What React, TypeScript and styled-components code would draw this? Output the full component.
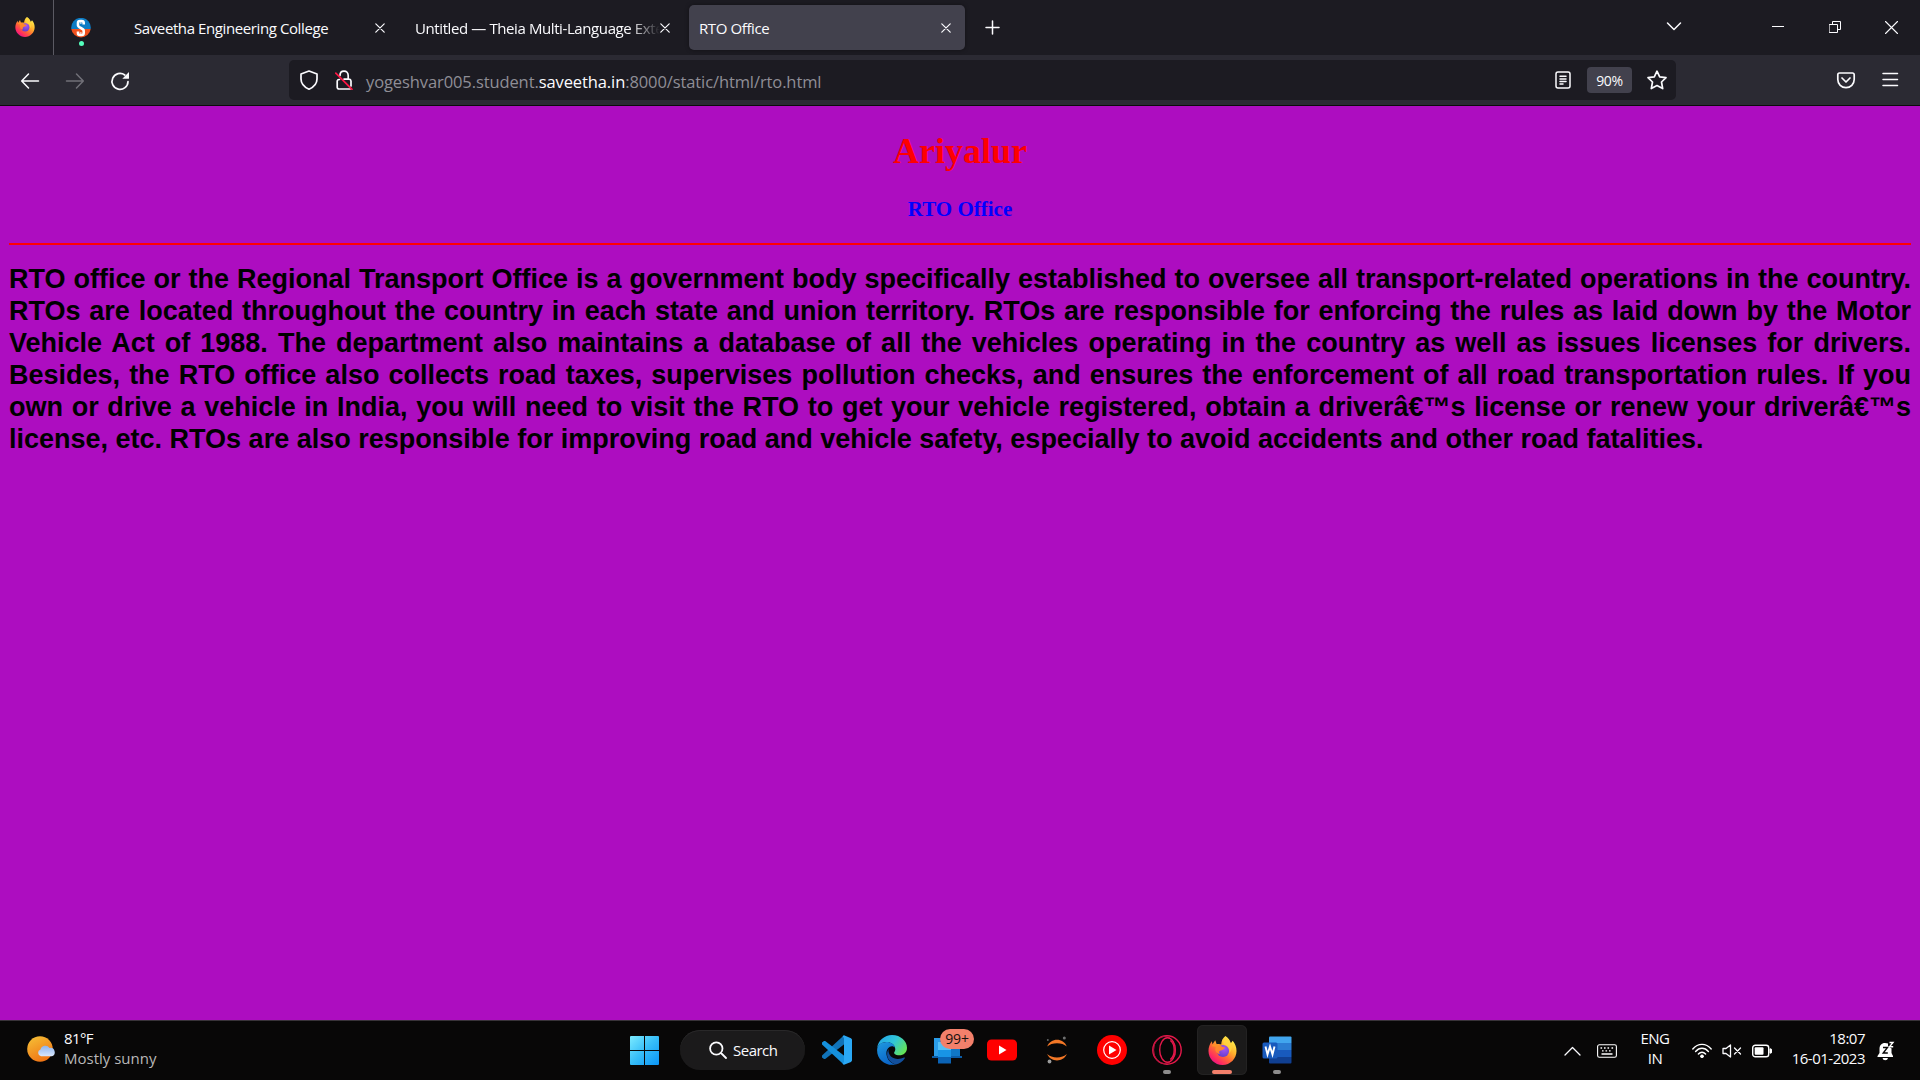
import React from 'react';
import styled, { createGlobalStyle } from 'styled-components';

const Global = createGlobalStyle`
  * { box-sizing: border-box; }
  html, body { margin: 0; padding: 0; background: #ad0dc0; overflow: hidden; }
  svg { display: block; flex: none; }
`;

const Screen = styled.div`
  width: 1920px;
  height: 1080px;
  display: flex;
  flex-direction: column;
  font-family: 'Open Sans', 'Noto Sans', sans-serif;
  color: #fbfbfe;
`;

/* ---------- tab strip ---------- */
const TabStrip = styled.div`
  height: 55px;
  background: #1c1b22;
  display: flex;
  align-items: stretch;
`;
const FirefoxView = styled.div`
  width: 54px;
  border-right: 1px solid #5b5a63;
  padding: 17px 0 0 15px;
`;
const PinnedTab = styled.div`
  width: 72px;
  padding: 18px 0 0 17px;
  display: flex;
  flex-direction: column;
`;
const Dot = styled.i`
  width: 5px;
  height: 5px;
  border-radius: 50%;
  background: #54ffbd;
  margin: 3px 0 0 8px;
`;
const Tab = styled.div<{ $w: number; $active?: boolean }>`
  width: ${p => p.$w}px;
  height: 45px;
  margin: 5px 5px 0 0;
  padding: 0 14px 0 ${p => (p.$active ? 10 : 8)}px;
  border-radius: 5px;
  background: ${p => (p.$active ? '#42414d' : 'transparent')};
  box-shadow: ${p => (p.$active ? '0 0 4px rgba(0,0,0,.4)' : 'none')};
  display: flex;
  align-items: center;
`;
const TabTitle = styled.span<{ $fade?: boolean; $ls: number }>`
  flex: 1;
  min-width: 0;
  overflow: hidden;
  white-space: nowrap;
  font-size: 15px;
  line-height: 24px;
  padding-top: 1px;
  letter-spacing: ${p => p.$ls}px;
  mask-image: ${p => (p.$fade ? 'linear-gradient(to left, transparent, #000 30px)' : 'none')};
`;
const NewTab = styled.div`
  padding: 20px 0 0 15px;
`;
const WindowControls = styled.div`
  margin-left: auto;
  display: flex;
  padding: 21px 22px 0 0;
`;
const Control = styled.div<{ $gap: number }>`
  margin-left: ${p => p.$gap}px;
`;

/* ---------- navigation bar ---------- */
const NavBar = styled.div`
  height: 51px;
  background: #2b2a33;
  border-bottom: 1px solid #0c0c0d;
  display: flex;
  align-items: center;
`;
const NavButtons = styled.div`
  width: 289px;
  padding: 2px 0 0 20px;
  display: flex;
  gap: 25px;
`;
const UrlBar = styled.div`
  width: 1387px;
  height: 40px;
  border-radius: 5px;
  background: #1c1b22;
  display: flex;
  align-items: center;
  padding: 0 8px 0 10px;
`;
const Url = styled.span`
  margin-left: 13px;
  padding-top: 3px;
  flex: 1;
  font-size: 16.5px;
  line-height: 24px;
  letter-spacing: -0.1px;
  color: #8f8e96;
  b { font-weight: 400; color: #fbfbfe; }
`;
const Zoom = styled.span`
  width: 45px;
  height: 26px;
  border-radius: 4px;
  background: #42414d;
  margin: 0 14px 0 16px;
  text-align: center;
  font-size: 14px;
  line-height: 28px;
  letter-spacing: -0.3px;
`;
const NavEnd = styled.div`
  margin-left: auto;
  padding-right: 21px;
  display: flex;
  gap: 26px;
`;

/* ---------- web page ---------- */
const Page = styled.main`
  height: 914px;
  background: #ad0dc0;
  padding: 24px 9px 0;
  font-family: 'Liberation Serif', 'Times New Roman', serif;
`;
const City = styled.h1`
  margin: 0 0 24px;
  text-align: center;
  color: #f00;
  font-size: 36px;
  line-height: 42px;
`;
const Office = styled.h3`
  margin: 0;
  text-align: center;
  color: #00f;
  font-size: 21px;
  line-height: 26px;
`;
const Rule = styled.hr`
  margin: 21px 0 18px;
  border: 0;
  height: 2px;
  background: #f00;
`;
const Body = styled.h2`
  margin: 0;
  text-align: justify;
  color: #000;
  font: bold 27px/32px 'Liberation Sans', Arial, sans-serif;
`;

/* ---------- taskbar ---------- */
const Taskbar = styled.footer`
  height: 60px;
  background: #080707;
  border-top: 1px solid #393339;
  display: flex;
`;
const Weather = styled.div`
  width: 619px;
  display: flex;
  padding: 7px 0 0 26px;
`;
const WeatherText = styled.div`
  margin-left: 8px;
  font-size: 15px;
  line-height: 20px;
  span { display: block; letter-spacing: -0.6px; }
  span + span { color: #b9b8b8; letter-spacing: 0; }
`;
const Slot = styled.div<{ $on?: boolean }>`
  width: 50px;
  height: 50px;
  margin: 4px 5px 0 0;
  border-radius: 6px;
  background: ${p => (p.$on ? '#1b1a1a' : 'transparent')};
  box-shadow: ${p => (p.$on ? 'inset 0 0 0 1px #232222' : 'none')};
  display: grid;
  place-items: center;
  position: relative;
`;
const Indicator = styled.i<{ $on?: boolean }>`
  position: absolute;
  bottom: 1px;
  width: ${p => (p.$on ? 20 : 8)}px;
  height: 4px;
  border-radius: 2px;
  background: ${p => (p.$on ? '#f3806b' : '#8d8c8c')};
`;
const Badge = styled.span`
  position: absolute;
  left: 18px;
  top: 4px;
  width: 34px;
  height: 20px;
  border-radius: 10px;
  background: #f3806b;
  color: #16100f;
  font-size: 14px;
  line-height: 20px;
  text-align: center;
  letter-spacing: -0.2px;
`;
const Search = styled.div`
  width: 125px;
  height: 40px;
  margin: 9px 7px 0 6px;
  border-radius: 20px;
  background: #1b1a1b;
  box-shadow: inset 0 1px 0 #292829;
  display: flex;
  align-items: center;
  padding-left: 29px;
  font-size: 15px;
  letter-spacing: -0.5px;
  span { margin-left: 6px; }
`;
const Tray = styled.div`
  margin-left: auto;
  display: flex;
  align-items: center;
  padding-right: 25px;
`;
const TrayItem = styled.div<{ $gap: number }>`
  margin-left: ${p => p.$gap}px;
`;
const TrayText = styled.div<{ $w: number; $align: string; $ls: number }>`
  width: ${p => p.$w}px;
  text-align: ${p => p.$align};
  font-size: 15px;
  line-height: 20px;
  letter-spacing: ${p => p.$ls}px;
  white-space: nowrap;
  padding-bottom: 5px;
  span { display: block; }
`;

/* ---------- icons ---------- */
const Line = ({ w, h, d, sw = 1.5, c = '#fbfbfe' }: { w: number; h: number; d: string; sw?: number; c?: string }) => (
  <svg width={w} height={h} viewBox={`0 0 ${w} ${h}`} fill="none" stroke={c} strokeWidth={sw} strokeLinecap="round" strokeLinejoin="round">
    <path d={d} />
  </svg>
);

const Firefox = ({ size, id }: { size: number; id: string }) => (
  <svg width={size} height={size} viewBox="0 0 30 30">
    <defs>
      <linearGradient id={`${id}a`} x1=".85" y1=".1" x2=".2" y2=".95">
        <stop offset="0" stopColor="#fff44f" />
        <stop offset=".35" stopColor="#ffb02c" />
        <stop offset=".6" stopColor="#ff6a34" />
        <stop offset=".85" stopColor="#ff2a62" />
        <stop offset="1" stopColor="#e31587" />
      </linearGradient>
      <radialGradient id={`${id}b`} cx=".6" cy=".3" r=".8">
        <stop offset="0" stopColor="#a755f5" />
        <stop offset="1" stopColor="#5b3bc4" />
      </radialGradient>
      <linearGradient id={`${id}c`} x1="0" y1="0" x2="1" y2="1">
        <stop offset="0" stopColor="#ff9a1f" />
        <stop offset="1" stopColor="#ff7139" />
      </linearGradient>
    </defs>
    <path fill={`url(#${id}a)`} d="M18 0c3 2 5 4.500 5.600 7.500L25.500 5c2.600 3 4 6.500 4 10.500C29.500 23.500 23 30 15 30S.5 23.500.5 15.500C.5 11.500 1.800 8.300 4 5.500l.6 3L7.500 4.500 9 8.500c2-.5 3.300-.3 4.700.3C13.800 5 15.300 2 18 0Z" />
    <circle cx="15.500" cy="15.500" r="6.300" fill={`url(#${id}b)`} />
    <path fill={`url(#${id}c)`} d="M3.500 10.500C7 7.500 12 8 14.500 11.200l3 .6c-.5 2-2.500 2.700-4.500 3.200-1.500.5-1.800 2-.8 3.600C8 18.500 6.500 14 8.500 11.500 7 10.500 5 10.500 3.500 10.500Z" />
    <path fill="#ffd53d" opacity=".8" d="M18 1c-2 2-2.700 5-1.700 7.700 4 .8 6.800 4.300 5.700 9 3-3 3.500-7 1.400-10.200C22.500 4.500 20.500 2.500 18 1Z" />
  </svg>
);

const Saveetha = () => (
  <svg width="20" height="20" viewBox="0 0 20 20">
    <path d="M.3 11A9.800 9.800 0 1 1 19.700 11Z" fill="#0d7cc4" />
    <path d="M.3 11A9.800 9.800 0 0 0 19.700 11Z" fill="#f0511e" />
    <path d="M12.700 6.500V5a2 2 0 0 0-2-2H9a2 2 0 0 0-2 2v2.300c0 2.700 5.700 2.700 5.700 5.400V15a2 2 0 0 1-2 2H9a2 2 0 0 1-2-2v-1.500" fill="none" stroke="#fff" strokeWidth="2.600" />
    <path d="M9.900 2v4M9.900 14v4" stroke="#fff" strokeWidth="1" />
  </svg>
);

const WeatherIcon = () => (
  <svg width="30" height="44" viewBox="0 0 30 44">
    <defs>
      <linearGradient id="sun" x1=".2" y1="0" x2=".7" y2="1"><stop stopColor="#f5bd35" /><stop offset="1" stopColor="#f07012" /></linearGradient>
      <linearGradient id="cloud" x1="0" y1="0" x2="0" y2="1"><stop stopColor="#8db4f0" /><stop offset="1" stopColor="#d9e6fb" /></linearGradient>
    </defs>
    <circle cx="14" cy="21" r="12.800" fill="url(#sun)" />
    <path d="M15 28.200a3.400 3.400 0 0 1-.5-6.600 5 5 0 0 1 9-1.600 4.300 4.300 0 0 1 2.500 8.200Z" fill="url(#cloud)" />
  </svg>
);

const Windows = () => (
  <svg width="29" height="29" viewBox="0 0 29 29">
    <defs><linearGradient id="win" gradientUnits="userSpaceOnUse" x1="0" y1="0" x2="29" y2="29"><stop stopColor="#7cebff" /><stop offset=".5" stopColor="#36bdf8" /><stop offset="1" stopColor="#0a94f5" /></linearGradient></defs>
    <path fill="url(#win)" d="M1 0h13v14H0V1a1 1 0 0 1 1-1ZM15 0h13a1 1 0 0 1 1 1v13H15ZM0 15h14v14H1a1 1 0 0 1-1-1ZM15 15h14v13a1 1 0 0 1-1 1H15Z" />
  </svg>
);

const VSCode = () => (
  <svg width="30" height="30" viewBox="0 0 30 30">
    <path d="M22 .3 0 20.500v2l2 1.600 1.200-.1L22.500 9Z" fill="#1173b8" />
    <path d="M22 29.700 0 9.500v-2l2-1.600 1.200.1L22.500 21Z" fill="#1590dc" />
    <path d="M22 .2 29 3.200 30 4.500v21l-1 1.400-7 2.900-1.500-1L22 27V3L20.500 1.300Z" fill="#2aa8f5" />
  </svg>
);

const Edge = () => (
  <svg width="30" height="30" viewBox="0 0 30 30">
    <defs>
      <linearGradient id="e1" x1="0" y1=".2" x2="1" y2=".7"><stop stopColor="#22a4e8" /><stop offset=".5" stopColor="#31c6d8" /><stop offset="1" stopColor="#66e552" /></linearGradient>
      <linearGradient id="e2" x1="0" y1="0" x2=".4" y2="1"><stop stopColor="#1f9ae0" /><stop offset="1" stopColor="#0b66c8" /></linearGradient>
    </defs>
    <path d="M.2 13C1 5.500 7.500 0 15 0c9 0 15 6.500 15 12.700 0 4.600-3.400 7.600-7.700 7.600-4 0-5.200-1.600-5.200-2.500 0-.8 1.200-1.300 1.200-3.500C18.300 10 14 7 9.500 7 5 7 1.800 9.500.2 13Z" fill="url(#e1)" />
    <path d="M.1 15C.3 10.500 4 7 9.500 7c4.500 0 7.800 2.300 8.700 5.800-1-1-2-1.500-3.300-1.500-3 0-6 3.500-5.400 8.200.6 5 4.500 9.300 9.200 10C9 31.500 0 25 .1 15Z" fill="url(#e2)" />
    <path d="M11.500 14c-3 5-1.500 12.500 7.200 15.600 3.500-.8 6.800-3 9-6.200.5-.8 0-1.200-.7-.9-7 3.500-16.500.5-15.500-8.500Z" fill="#124f9c" />
  </svg>
);

const Store = () => (
  <svg width="30" height="28" viewBox="0 0 30 28">
    <path d="M2 2h26v18H2Z" fill="#1077c6" />
    <path d="M2 2h6v18H2Z" fill="#2a9ce8" />
    <path d="M0 20h30v2H0Z" fill="#0a5ca8" />
    <path d="M6 6h13v21H6Z" fill="#1894e6" />
    <path d="M6 6h13v8H6Z" fill="#54bff5" />
    <path d="M6 21h13v6.500H6Z" fill="#0b63b5" />
  </svg>
);

const YouTube = () => (
  <svg width="30" height="22" viewBox="0 0 30 22"><rect y=".5" width="30" height="21" rx="4.500" fill="#f00" /><path d="M12 6.500v9l7.500-4.500Z" fill="#fff" /></svg>
);

const Jupyter = () => (
  <svg width="24" height="30" viewBox="0 0 24 30">
    <path d="M2.200 11.500C5.500 2.500 18.500 2.500 21.800 11.500 17.500 7 6.500 7 2.200 11.500ZM2.200 19C5.500 27.500 18.500 27.500 21.800 19 17.500 23.500 6.500 23.500 2.200 19Z" fill="#f37726" />
    <circle cx="19.300" cy="3" r="1.500" fill="#6f7070" /><circle cx="2.800" cy="5" r="1" fill="#656666" /><circle cx="4.500" cy="26.500" r="1.900" fill="#9b9b9b" />
  </svg>
);

const YTMusic = () => (
  <svg width="30" height="30" viewBox="0 0 30 30"><circle cx="15" cy="15" r="15" fill="#f00" /><circle cx="15" cy="15" r="8.300" fill="none" stroke="#fff" strokeWidth="1.200" /><path d="M12 10.500v9l7.500-4.500Z" fill="#fff" /></svg>
);

const OperaGX = () => (
  <svg width="30" height="30" viewBox="0 0 30 30" fill="none" stroke="#e5184a" strokeWidth="1.400">
    <circle cx="15" cy="15" r="14.200" /><ellipse cx="12.600" cy="15" rx="11" ry="13.700" stroke="#b3123b" strokeWidth="1" /><ellipse cx="15.500" cy="15" rx="7.800" ry="12.200" /><path d="M18.300 5.500C23.500 9.500 23.500 20.500 18.300 24.500" />
  </svg>
);

const Word = () => (
  <svg width="30" height="28" viewBox="0 0 30 28">
    <path d="M8 .5h20.500a1 1 0 0 1 1 1V7H7V1.500a1 1 0 0 1 1-1Z" fill="#41a5ee" /><path d="M7 7h22.500v7H7Z" fill="#2b7cd3" /><path d="M7 14h22.500v7H7Z" fill="#185abd" /><path d="M7 21h22.500v5.500a1 1 0 0 1-1 1H8a1 1 0 0 1-1-1Z" fill="#103f91" />
    <rect x=".5" y="6.500" width="15" height="16" rx="1.500" fill="#185abd" />
    <path d="m3.500 10.500 2 8 2.500-8 2.500 8 2-8" fill="none" stroke="#fff" strokeWidth="1.900" />
  </svg>
);

const Reader = () => <Line w={16} h={18} d="M3 1h10a2 2 0 0 1 2 2v12a2 2 0 0 1-2 2H3a2 2 0 0 1-2-2V3a2 2 0 0 1 2-2ZM5 5.200h6M5 8h6M5 10.500h6M5 13h3" />;

const Lock = () => (
  <svg width="18" height="20" viewBox="0 0 18 20" fill="none" stroke="#fbfbfe" strokeWidth="1.700" strokeLinecap="round">
    <path d="M4.500 9.500H4A2 2 0 0 0 2.200 11v6A1.800 1.800 0 0 0 4 19h11M16 16v-5a2 2 0 0 0-2-1.800H9M5 5.500C5 3 6.500 1.200 9 1.200S13.200 3 13.200 5.500V9" />
    <path d="M.8 3.200 17 19.300" stroke="#ff1744" />
  </svg>
);

const Wifi = () => (
  <svg width="20" height="16" viewBox="0 0 20 16" fill="none" stroke="#fff" strokeWidth="1.400" strokeLinecap="round">
    <path d="M.8 6C6-.2 14-.2 19.200 6M3.600 8.500c3.700-4.300 9.100-4.300 12.800 0M6.400 11c2.200-2.400 5-2.400 7.200 0" /><circle cx="10" cy="13.300" r="1.500" fill="#fff" stroke="none" /><circle cx="10" cy="13.300" r="1.700" fill="#fff" stroke="none" />
  </svg>
);

const Battery = () => (
  <svg width="20" height="14" viewBox="0 0 20 14"><rect x=".7" y="1.200" width="16" height="11.600" rx="2.600" fill="none" stroke="#fff" strokeWidth="1.400" /><rect x="2.700" y="3.200" width="8.800" height="7.600" rx="1" fill="#fff" /><path d="M18 4.800a1.800 1.800 0 0 1 0 4.400Z" fill="#fff" stroke="#fff" /></svg>
);

const Keyboard = () => (
  <svg width="20" height="14" viewBox="0 0 20 14" stroke="#fff" fill="none" strokeWidth="1.100"><rect x=".6" y=".8" width="18.800" height="12.400" rx="1.800" /><path d="M3.500 4h1.600M7 4h1.600M10.500 4h1.600M14.500 4h1.600M5 6.800h1.600M8.500 6.800h1.600M12 6.800h1.600M4.500 10h11" strokeWidth="1.300" /></svg>
);

const Bell = () => (
  <svg width="18" height="20" viewBox="0 0 18 20">
    <path d="M8 2C4.500 2 2.500 4.500 2.500 8v4L.5 15v1h15.500v-1l-1.500-3V3Z" fill="#fff" /><path d="M5.500 17h5.500a2.800 2.800 0 0 1-5.500 0Z" fill="#fff" />
    <path d="M11 .3h6.500v7H14L11 5Z" fill="#080707" />
    <path d="M12.500 1.500H16l-3.500 4.300h3.700" fill="none" stroke="#fff" strokeWidth="1.400" /><path d="M6 6.500h4.500L6.200 12h4.600" fill="none" stroke="#080707" strokeWidth="1.400" />
  </svg>
);

const TabClose = () => <Line w={10} h={10} d="M.8.800l8.400 8.400M9.200.800l-8.400 8.400" sw={1.2} />;

const apps = [
  { icon: <VSCode /> },
  { icon: <Edge /> },
  { icon: <Store />, badge: '99+' },
  { icon: <YouTube /> },
  { icon: <Jupyter /> },
  { icon: <YTMusic /> },
  { icon: <OperaGX />, running: true },
  { icon: <Firefox size={29} id="ft" />, running: true, active: true },
  { icon: <Word />, running: true },
];

export default function App() {
  return (
    <Screen>
      <Global />
      <TabStrip>
        <FirefoxView><Firefox size={20} id="fv" /></FirefoxView>
        <PinnedTab><Saveetha /><Dot /></PinnedTab>
        <Tab $w={273}><TabTitle $ls={-0.4}>Saveetha Engineering College</TabTitle><TabClose /></Tab>
        <Tab $w={277} style={{ marginLeft: 3 }}><TabTitle $fade $ls={-0.4}>Untitled — Theia Multi-Language Extension</TabTitle><TabClose /></Tab>
        <Tab $w={276} $active><TabTitle $ls={-0.4}>RTO Office</TabTitle><TabClose /></Tab>
        <NewTab><Line w={15} h={15} d="M7.500 1v13M1 7.500h13" /></NewTab>
        <WindowControls>
          <Control $gap={0}><Line w={16} h={11} d="M1.500 2l6.500 6.500L14.500 2" /></Control>
          <Control $gap={90}><Line w={12} h={12} d="M0 5.500h12" sw={1} /></Control>
          <Control $gap={45}><Line w={12} h={12} d="M.5 3.500h8v8h-8ZM3.500 3.500v-3h8v8h-3" sw={1} /></Control>
          <Control $gap={44}><Line w={13} h={13} d="M.5.500l12 12M12.500.500l-12 12" sw={1.1} /></Control>
        </WindowControls>
      </TabStrip>

      <NavBar>
        <NavButtons>
          <Line w={20} h={20} d="M18.500 10H2M8.500 3L1.700 10l6.800 7" />
          <Line w={20} h={20} d="M1.500 10H18M11.500 3l6.800 7-6.800 7" c="#717078" />
          <svg width="20" height="20" viewBox="0 0 20 20"><path d="M18 10.500A8 8 0 1 1 14.800 4" fill="none" stroke="#fbfbfe" strokeWidth="1.700" strokeLinecap="round" /><path d="M19 1v6.200a.6.600 0 0 1-.6.600h-6.100Z" fill="#fbfbfe" /></svg>
        </NavButtons>
        <UrlBar>
          <Line w={20} h={20} d="M10 1 18 4v5c0 4.500-3 8-8 10.200C5 17 2 13.500 2 9V4Z" sw={1.7} />
          <div style={{ width: 16 }} />
          <Lock />
          <Url>yogeshvar005.student.<b>saveetha.in</b>:8000/static/html/rto.html</Url>
          <Reader />
          <Zoom>90%</Zoom>
          <Line w={22} h={20} d="M11 1.200 13.700 6.800 20 7.700 15.500 12l1.200 6.600L11 15.600 5.300 18.600 6.500 12 2 7.700 8.300 6.800Z" sw={1.7} />
        </UrlBar>
        <NavEnd>
          <Line w={20} h={18} d="M3.500 2h13a1.700 1.700 0 0 1 1.700 1.700V8.500a8.200 8.200 0 0 1-16.400 0V3.700A1.700 1.700 0 0 1 3.500 2ZM6 7l4 4 4-4" sw={1.7} />
          <Line w={17} h={18} d="M1 2.500h14.500M1 8.500h14.500M1 14.500h14.500" />
        </NavEnd>
      </NavBar>

      <Page>
        <City>Ariyalur</City>
        <Office>RTO Office</Office>
        <Rule />
        <Body>
          RTO office or the Regional Transport Office is a government body specifically established to oversee all transport-related operations in the country. RTOs are located throughout the country in each state and union territory. RTOs are responsible for enforcing the rules as laid down by the Motor Vehicle Act of 1988. The department also maintains a database of all the vehicles operating in the country as well as issues licenses for drivers. Besides, the RTO office also collects road taxes, supervises pollution checks, and ensures the enforcement of all road transportation rules. If you own or drive a vehicle in India, you will need to visit the RTO to get your vehicle registered, obtain a driverâ€™s license or renew your driverâ€™s license, etc. RTOs are also responsible for improving road and vehicle safety, especially to avoid accidents and other road fatalities.
        </Body>
      </Page>

      <Taskbar>
        <Weather>
          <WeatherIcon />
          <WeatherText><span>81°F</span><span>Mostly sunny</span></WeatherText>
        </Weather>
        <Slot><Windows /></Slot>
        <Search>
          <Line w={18} h={18} d="M13.500 7.500a6.200 6.200 0 1 1-12.400 0 6.200 6.200 0 0 1 12.400 0ZM12 12l5 5" sw={1.8} />
          <span>Search</span>
        </Search>
        {apps.map((a, i) => (
          <Slot key={i} $on={a.active}>
            {a.icon}
            {a.badge && <Badge>{a.badge}</Badge>}
            {a.running && <Indicator $on={a.active} />}
          </Slot>
        ))}
        <Tray>
          <TrayItem $gap={0}><Line w={17} h={10} d="M1 9l7.500-7.500L16 9" sw={1.3} /></TrayItem>
          <TrayItem $gap={16}><Keyboard /></TrayItem>
          <TrayItem $gap={18}><TrayText $w={40} $align="center" $ls={-0.5}><span>ENG</span><span>IN</span></TrayText></TrayItem>
          <TrayItem $gap={17}><Wifi /></TrayItem>
          <TrayItem $gap={10}><Line w={20} h={14} d="M1 4.500h3L8.500 1v12L4 9.500H1ZM12.500 4l6 6M18.500 4l-6 6" sw={1.3} /></TrayItem>
          <TrayItem $gap={10}><Battery /></TrayItem>
          <TrayItem $gap={13}><TrayText $w={80} $align="right" $ls={-0.5}><span>18:07</span><span>16-01-2023</span></TrayText></TrayItem>
          <TrayItem $gap={12}><Bell /></TrayItem>
        </Tray>
      </Taskbar>
    </Screen>
  );
}
